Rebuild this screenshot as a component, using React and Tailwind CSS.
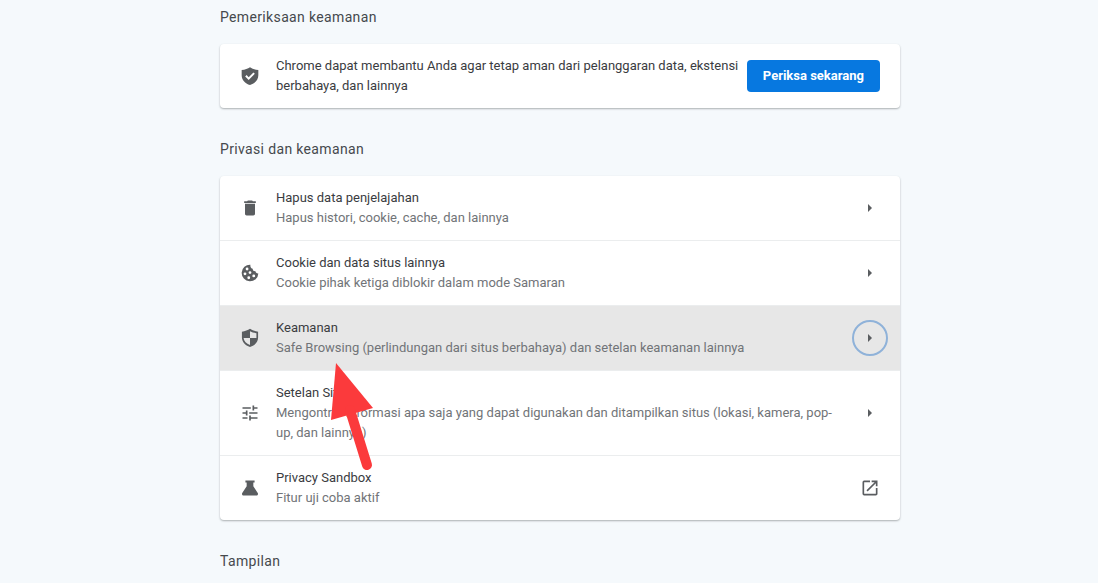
import React from "react";
import { MdDelete, MdOpenInNew, MdTune } from "react-icons/md";

const ShieldCheckIcon = ({ className }) => (
  <svg viewBox="0 0 24 24" fill="currentColor" className={className} aria-hidden="true">
    <path
      fillRule="evenodd"
      d="M12 1.500C14.500 3.300 18 4.500 22 4.800v6.200c0 5.600-4 10-10 11.800C6 21 2 16.600 2 11V4.800C6 4.500 9.500 3.300 12 1.500Zm-1.600 15.300 7.400-7.400-1.700-1.700-5.700 5.700-2.500-2.500-1.700 1.700 4.200 4.200Z"
    />
  </svg>
);

const ShieldIcon = ({ className }) => (
  <svg viewBox="0 0 24 24" fill="currentColor" className={className} aria-hidden="true">
    <path
      fillRule="evenodd"
      d="M12 1C14.500 2.800 18 4 21.700 4.400V11.500c0 5.300-3.900 9.500-9.700 11.300-5.800-1.800-9.700-6-9.700-11.300V4.400C6 4 9.500 2.800 12 1Zm0 2.800V12H4.300c.4 3.900 3.300 6.900 7.700 8.500V12h7.700V6.200C16.700 5.800 14.200 5 12 3.800Z"
    />
  </svg>
);

const CookieIcon = ({ className }) => (
  <svg viewBox="0 0 24 24" fill="currentColor" className={className} aria-hidden="true">
    <path
      fillRule="evenodd"
      d="M12.500 2A10 10 0 1 0 22 12.500c-1.800.2-3.200-.8-3.400-2.500-1.900.3-3.500-1-3.300-3C13.400 6.800 12 4.800 12.500 2ZM8.500 5.500a1.700 1.700 0 1 0 0 3.400 1.700 1.700 0 0 0 0-3.400ZM6 11.300a1.700 1.700 0 1 0 0 3.400 1.700 1.700 0 0 0 0-3.400ZM12 9.800a1.700 1.700 0 1 0 0 3.400 1.700 1.700 0 0 0 0-3.400ZM10.500 16a1.700 1.700 0 1 0 0 3.400 1.700 1.700 0 0 0 0-3.400ZM16.500 13.800a1.700 1.700 0 1 0 0 3.400 1.700 1.700 0 0 0 0-3.400Z"
    />
  </svg>
);

const FlaskIcon = ({ className }) => (
  <svg viewBox="0 0 24 24" fill="currentColor" className={className} aria-hidden="true">
    <path d="M6.500 3h11v2.500H16V10l5.300 8c.8 1.500 0 3-1.500 3H4.200c-1.500 0-2.300-1.500-1.500-3L8 10V5.500H6.500V3Z" />
  </svg>
);

const CaretIcon = () => (
  <svg viewBox="0 0 20 20" fill="currentColor" className="w-5 h-5" aria-hidden="true">
    <path d="M8 6v8l4-4-4-4Z" />
  </svg>
);

const settings = [
  {
    title: "Hapus data penjelajahan",
    description: "Hapus histori, cookie, cache, dan lainnya",
    icon: MdDelete,
  },
  {
    title: "Cookie dan data situs lainnya",
    description: "Cookie pihak ketiga diblokir dalam mode Samaran",
    icon: CookieIcon,
  },
  {
    title: "Keamanan",
    description:
      "Safe Browsing (perlindungan dari situs berbahaya) dan setelan keamanan lainnya",
    icon: ShieldIcon,
    active: true,
  },
  {
    title: "Setelan Situs",
    description:
      "Mengontrol informasi apa saja yang dapat digunakan dan ditampilkan situs (lokasi, kamera, pop-up, dan lainnya)",
    icon: MdTune,
  },
  {
    title: "Privacy Sandbox",
    description: "Fitur uji coba aktif",
    icon: FlaskIcon,
    external: true,
  },
];

const SettingRow = ({ title, description, icon: Icon, active, external }) => (
  <li
    className={
      active
        ? "flex items-center gap-4 px-5 py-3 bg-[#e7e7e7]"
        : "flex items-center gap-4 px-5 py-3"
    }
  >
    <Icon className="flex-none w-5 h-5 text-[#5a5d60]" />
    <div className="flex-1 min-w-0">
      <div className="text-[#3a3c3f]">{title}</div>
      <div className="text-[#717478]">{description}</div>
    </div>
    <button
      type="button"
      aria-label={title}
      className={
        active
          ? "flex-none flex items-center justify-center w-9 h-9 -mr-2 rounded-full border-2 border-[#8fb2d9] text-[#5a5d60]"
          : "flex-none flex items-center justify-center w-9 h-9 -mr-2 rounded-full text-[#5a5d60]"
      }
    >
      {external ? <MdOpenInNew className="w-5 h-5" /> : <CaretIcon />}
    </button>
  </li>
);

const App = () => {
  return (
    <div className="min-h-screen bg-[#f5f9fc] font-[Roboto,sans-serif] text-[13px] leading-5">
      <main className="max-w-[702px] mx-auto pl-[22px]">
        {/* Pemeriksaan keamanan */}
        <section>
          <h2 className="pt-[7px] pb-[17px] text-sm leading-5 tracking-wide text-[#45494d]">
            Pemeriksaan keamanan
          </h2>
          <div className="flex items-center gap-4 px-5 py-3 rounded bg-white shadow-[0_1px_2px_rgba(60,64,67,0.4)]">
            <ShieldCheckIcon className="flex-none w-5 h-5 text-[#5a5d60]" />
            <p className="flex-1 -mr-2 text-[#3a3c3f]">
              Chrome dapat membantu Anda agar tetap aman dari pelanggaran data,
              ekstensi berbahaya, dan lainnya
            </p>
            <button
              type="button"
              className="flex-none h-8 px-4 rounded bg-[#0778e0] text-white font-bold"
            >
              Periksa sekarang
            </button>
          </div>
        </section>

        {/* Privasi dan keamanan */}
        <section>
          <h2 className="pt-[31px] pb-[17px] text-sm leading-5 tracking-wide text-[#45494d]">
            Privasi dan keamanan
          </h2>
          <div className="relative">
            <ul className="rounded bg-white divide-y divide-[#ebedee] shadow-[0_1px_2px_rgba(60,64,67,0.4)]">
              {settings.map((item) => (
                <SettingRow key={item.title} {...item} />
              ))}
            </ul>
            {/* Panah penunjuk */}
            <svg
              viewBox="0 0 46 110"
              className="absolute left-[109px] top-[186px] w-[46px] h-[110px] pointer-events-none"
              aria-hidden="true"
            >
              <path d="M7 1 44 46 2 58Z" fill="#fb3a3c" />
              <path
                d="M21 48 38 103"
                stroke="#fb3a3c"
                strokeWidth="10"
                strokeLinecap="round"
              />
            </svg>
          </div>
        </section>

        {/* Tampilan */}
        <section>
          <h2 className="pt-[31px] text-sm leading-5 tracking-wide text-[#45494d]">
            Tampilan
          </h2>
        </section>
      </main>
    </div>
  );
};

export default App;
